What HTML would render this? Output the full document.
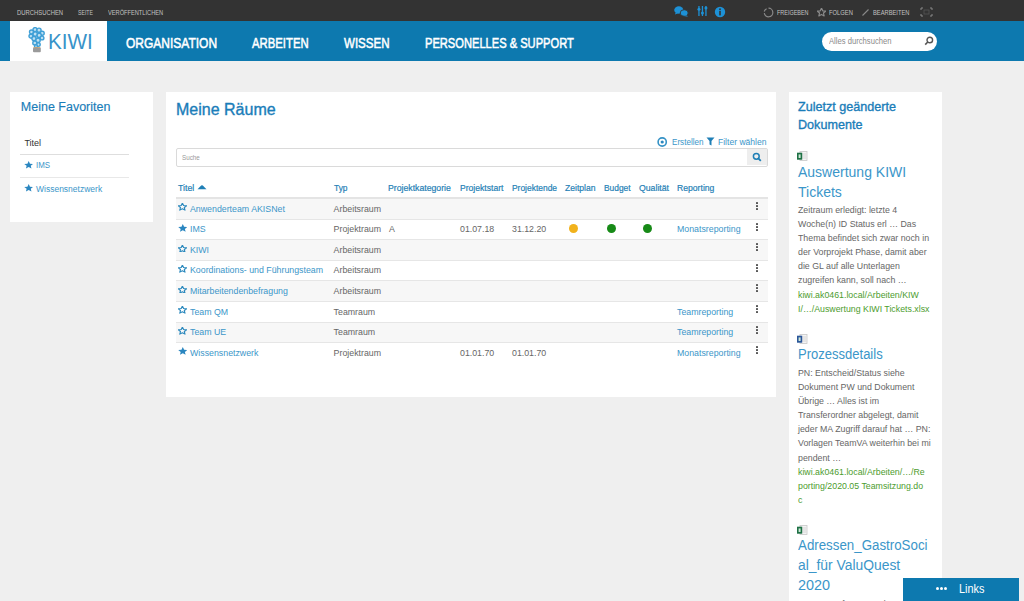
<!DOCTYPE html>
<html><head><meta charset="utf-8">
<style>
*{margin:0;padding:0;box-sizing:border-box}
html,body{width:1024px;height:601px;overflow:hidden;background:#efefef;font-family:"Liberation Sans",sans-serif;position:relative}
.a{position:absolute;white-space:nowrap;line-height:0}
.r{position:absolute}
</style></head><body>
<div class="r" style="left:0px;top:0px;width:1024px;height:21px;background:#333333;"></div>
<div class="a " style="left:17px;top:12.75px;font-size:7px;color:#c2c2c2;transform-origin:0 0;transform:scaleX(0.84)">DURCHSUCHEN</div>
<div class="a " style="left:78px;top:12.75px;font-size:7px;color:#c2c2c2;transform-origin:0 0;transform:scaleX(0.74)">SEITE</div>
<div class="a " style="left:107.5px;top:12.75px;font-size:7px;color:#c2c2c2;transform-origin:0 0;transform:scaleX(0.81)">VERÖFFENTLICHEN</div>
<div class="a " style="left:776.5px;top:12.75px;font-size:7px;color:#c2c2c2;transform-origin:0 0;transform:scaleX(0.78)">FREIGEBEN</div>
<div class="a " style="left:828.5px;top:12.75px;font-size:7px;color:#c2c2c2;transform-origin:0 0;transform:scaleX(0.83)">FOLGEN</div>
<div class="a " style="left:873px;top:12.75px;font-size:7px;color:#c2c2c2;transform-origin:0 0;transform:scaleX(0.82)">BEARBEITEN</div>
<svg class="r" style="left:674px;top:6px" width="15" height="11" viewBox="0 0 15 11"><ellipse cx="4.8" cy="4" rx="4.6" ry="3.7" fill="#1d91d6"/><path d="M1.8 6 L1 8.6 L4.2 7.2Z" fill="#1d91d6"/><ellipse cx="10.2" cy="7" rx="4" ry="3.3" fill="#1d91d6" stroke="#333" stroke-width="0.9"/><path d="M12.2 9.2 L14 10.8 L10 10Z" fill="#1d91d6"/></svg>
<svg class="r" style="left:697px;top:5px" width="11" height="12" viewBox="0 0 11 12"><rect x="1.3" y="1" width="1.3" height="10" fill="#1d91d6"/><rect x="4.8" y="1" width="1.3" height="10" fill="#1d91d6"/><rect x="8.3" y="1" width="1.3" height="10" fill="#1d91d6"/><circle cx="1.95" cy="4.2" r="1.5" fill="#1d91d6"/><circle cx="5.45" cy="8" r="1.5" fill="#1d91d6"/><circle cx="8.95" cy="3" r="1.5" fill="#1d91d6"/></svg>
<svg class="r" style="left:714px;top:6px" width="12" height="12" viewBox="0 0 12 12"><circle cx="6" cy="6" r="5.2" fill="#1d91d6"/><rect x="5.2" y="4.8" width="1.6" height="4.6" fill="#333"/><circle cx="6" cy="3.2" r="0.9" fill="#333"/></svg>
<svg class="r" style="left:763px;top:7px" width="11" height="11" viewBox="0 0 11 11"><path d="M5.5 1.2 A4.3 4.3 0 1 1 1.3 6.2" fill="none" stroke="#8a8a8a" stroke-width="1.2"/><path d="M1.2 4.5 A4.3 4.3 0 0 1 3.6 1.8" fill="none" stroke="#8a8a8a" stroke-width="1.2"/></svg>
<svg class="r" style="left:817px;top:8px" width="9" height="8.50" viewBox="0 0.4 10 9.2" preserveAspectRatio="none"><path d="M5.00,0.45 L6.35,3.43 L9.76,3.73 L7.19,5.88 L7.94,9.04 L5.00,7.38 L2.06,9.04 L2.81,5.88 L0.24,3.73 L3.65,3.43Z" fill="none" stroke="#8a8a8a" stroke-width="1.3" stroke-linejoin="round"/></svg>
<svg class="r" style="left:861px;top:8px" width="9" height="9" viewBox="0 0 9 9"><path d="M1.5 7.5 L7.5 1.5" stroke="#8a8a8a" stroke-width="1.1"/></svg>
<svg class="r" style="left:920px;top:7px" width="13" height="10" viewBox="0 0 13 10"><path d="M1 3 V1 H3 M10 1 H12 V3 M12 7 V9 H10 M3 9 H1 V7" fill="none" stroke="#8a8a8a" stroke-width="1"/><rect x="4" y="3" width="5" height="4" fill="none" stroke="#555" stroke-width="0.8"/></svg>
<div class="r" style="left:0px;top:21px;width:1024px;height:40px;background:#0d79af;"></div>
<div class="r" style="left:10px;top:21px;width:97px;height:40px;background:#ffffff;"></div>
<div class="a " style="left:126px;top:42.60px;font-size:14px;color:#ffffff;-webkit-text-stroke:0.5px #fff;transform-origin:0 0;transform:scaleX(0.8567397234502869)">ORGANISATION</div>
<div class="a " style="left:252px;top:42.60px;font-size:14px;color:#ffffff;-webkit-text-stroke:0.5px #fff;transform-origin:0 0;transform:scaleX(0.8094843593772318)">ARBEITEN</div>
<div class="a " style="left:344px;top:42.60px;font-size:14px;color:#ffffff;-webkit-text-stroke:0.5px #fff;transform-origin:0 0;transform:scaleX(0.8245518739815318)">WISSEN</div>
<div class="a " style="left:425px;top:42.60px;font-size:14px;color:#ffffff;-webkit-text-stroke:0.5px #fff;transform-origin:0 0;transform:scaleX(0.7944672897196261)">PERSONELLES &amp; SUPPORT</div>
<svg class="r" style="left:28px;top:27px" width="17" height="26" viewBox="0 0 17 26"><circle cx="3.5" cy="5" r="2" fill="#bfe0f2" stroke="#3f9fd6" stroke-width="1.4"/><circle cx="7" cy="2.6" r="2" fill="#bfe0f2" stroke="#3f9fd6" stroke-width="1.4"/><circle cx="11" cy="3.2" r="2.1" fill="#bfe0f2" stroke="#3f9fd6" stroke-width="1.4"/><circle cx="14.2" cy="6.2" r="2" fill="#bfe0f2" stroke="#3f9fd6" stroke-width="1.4"/><circle cx="3" cy="9.2" r="2" fill="#bfe0f2" stroke="#3f9fd6" stroke-width="1.4"/><circle cx="7.2" cy="7" r="2.2" fill="#bfe0f2" stroke="#3f9fd6" stroke-width="1.4"/><circle cx="11.2" cy="8.4" r="2.1" fill="#bfe0f2" stroke="#3f9fd6" stroke-width="1.4"/><circle cx="14" cy="11" r="1.9" fill="#bfe0f2" stroke="#3f9fd6" stroke-width="1.4"/><circle cx="6" cy="11.6" r="2.1" fill="#bfe0f2" stroke="#3f9fd6" stroke-width="1.4"/><circle cx="10" cy="13.2" r="2.2" fill="#bfe0f2" stroke="#3f9fd6" stroke-width="1.4"/><circle cx="6.8" cy="16" r="2" fill="#bfe0f2" stroke="#3f9fd6" stroke-width="1.4"/><circle cx="10.4" cy="17.6" r="1.8" fill="#bfe0f2" stroke="#3f9fd6" stroke-width="1.4"/><circle cx="8" cy="19.2" r="1.5" fill="#bfe0f2" stroke="#3f9fd6" stroke-width="1.4"/><rect x="5" y="20.4" width="7.8" height="4.8" rx="1" fill="#9a9a9a"/><rect x="5.5" y="20" width="6.8" height="0.8" fill="#c8a070"/></svg>
<div class="a " style="left:47.8px;top:42.33px;font-size:22.5px;color:#3893c9;transform-origin:0 0;transform:scaleX(0.92)">KIWI</div>
<div class="r" style="left:822px;top:32px;width:115px;height:18.5px;background:#ffffff;border-radius:9.5px"></div>
<svg class="r" style="left:924px;top:36px" width="10" height="10" viewBox="0 0 10 10"><circle cx="5.8" cy="4" r="2.8" fill="none" stroke="#555" stroke-width="1.4"/><path d="M3.8 6 L1.2 8.6" stroke="#555" stroke-width="1.6"/></svg>
<div class="a " style="left:829px;top:40.85px;font-size:9px;color:#8a8a8a;transform-origin:0 0;transform:scaleX(0.85)">Alles durchsuchen</div>
<div class="r" style="left:10px;top:92px;width:143px;height:130px;background:#fff;"></div>
<div class="r" style="left:166px;top:92px;width:610px;height:305px;background:#fff;"></div>
<div class="r" style="left:789px;top:92px;width:153px;height:509px;background:#fff;"></div>
<div class="a " style="left:20.8px;top:107.12px;font-size:12.5px;color:#1a7db9;-webkit-text-stroke:0.15px currentColor">Meine Favoriten</div>
<div class="a " style="left:24.4px;top:142.65px;font-size:9px;color:#333;">Titel</div>
<div class="r" style="left:20px;top:153.5px;width:109px;height:1px;background:#dedede;"></div>
<svg class="r" style="left:23.8px;top:160.6px" width="9.4" height="8.00" viewBox="0 0.4 10 9.2" preserveAspectRatio="none"><path d="M5.00,0.45 L6.35,3.43 L9.76,3.73 L7.19,5.88 L7.94,9.04 L5.00,7.38 L2.06,9.04 L2.81,5.88 L0.24,3.73 L3.65,3.43Z" fill="#2a86c0"/></svg>
<div class="a " style="left:36px;top:165.42px;font-size:8.8px;color:#3b96c9;transform-origin:0 0;transform:scaleX(0.9)">IMS</div>
<div class="r" style="left:20px;top:177px;width:109px;height:1px;background:#e8e8e8;"></div>
<svg class="r" style="left:23.8px;top:184px" width="9.4" height="8.00" viewBox="0 0.4 10 9.2" preserveAspectRatio="none"><path d="M5.00,0.45 L6.35,3.43 L9.76,3.73 L7.19,5.88 L7.94,9.04 L5.00,7.38 L2.06,9.04 L2.81,5.88 L0.24,3.73 L3.65,3.43Z" fill="#2a86c0"/></svg>
<div class="a " style="left:36px;top:188.83px;font-size:8.5px;color:#3b96c9;">Wissensnetzwerk</div>
<div class="a " style="left:176px;top:109.90px;font-size:16px;color:#1a7db9;-webkit-text-stroke:0.35px currentColor">Meine Räume</div>
<div class="a " style="left:671.5px;top:141.85px;font-size:9px;color:#3b96c9;transform-origin:0 0;transform:scaleX(0.9)">Erstellen</div>
<div class="a " style="left:718px;top:141.85px;font-size:9px;color:#3b96c9;transform-origin:0 0;transform:scaleX(0.95)">Filter wählen</div>
<div class="r" style="left:175.5px;top:148px;width:592.5px;height:18.5px;background:#fff;border:1px solid #dadada;border-radius:2px"></div>
<div class="r" style="left:747px;top:149px;width:20px;height:16px;background:#eeeeee;"></div>
<div class="a " style="left:182px;top:157.55px;font-size:7px;color:#9a9a9a;transform-origin:0 0;transform:scaleX(0.9)">Suche</div>
<div class="a " style="left:178px;top:187.85px;font-size:9px;color:#1f7fb6;-webkit-text-stroke:0.2px currentColor;transform-origin:0 0;transform:scaleX(0.972)">Titel</div>
<div class="a " style="left:333.6px;top:187.85px;font-size:9px;color:#1f7fb6;-webkit-text-stroke:0.2px currentColor;transform-origin:0 0;transform:scaleX(0.930)">Typ</div>
<div class="a " style="left:388.4px;top:187.85px;font-size:9px;color:#1f7fb6;-webkit-text-stroke:0.2px currentColor;transform-origin:0 0;transform:scaleX(0.966)">Projektkategorie</div>
<div class="a " style="left:459.9px;top:187.85px;font-size:9px;color:#1f7fb6;-webkit-text-stroke:0.2px currentColor;transform-origin:0 0;transform:scaleX(0.954)">Projektstart</div>
<div class="a " style="left:511.7px;top:187.85px;font-size:9px;color:#1f7fb6;-webkit-text-stroke:0.2px currentColor;transform-origin:0 0;transform:scaleX(0.937)">Projektende</div>
<div class="a " style="left:565.3px;top:187.85px;font-size:9px;color:#1f7fb6;-webkit-text-stroke:0.2px currentColor;transform-origin:0 0;transform:scaleX(0.953)">Zeitplan</div>
<div class="a " style="left:604px;top:187.85px;font-size:9px;color:#1f7fb6;-webkit-text-stroke:0.2px currentColor;transform-origin:0 0;transform:scaleX(0.933)">Budget</div>
<div class="a " style="left:638.8px;top:187.85px;font-size:9px;color:#1f7fb6;-webkit-text-stroke:0.2px currentColor;transform-origin:0 0;transform:scaleX(0.967)">Qualität</div>
<div class="a " style="left:677px;top:187.85px;font-size:9px;color:#1f7fb6;-webkit-text-stroke:0.2px currentColor;transform-origin:0 0;transform:scaleX(0.958)">Reporting</div>
<div class="r" style="left:176px;top:197px;width:592px;height:2px;background:#e4e4e4;"></div>
<svg class="r" style="left:197px;top:185px" width="10" height="5" viewBox="0 0 10 5"><path d="M0.5 4.2 L4.2 0.6 Q5 0 5.8 0.6 L9.5 4.2Z" fill="#1f7fb6"/></svg>
<svg class="r" style="left:657px;top:137px" width="11" height="11" viewBox="0 0 11 11"><circle cx="5.2" cy="5" r="4.1" fill="none" stroke="#3592c6" stroke-width="1.6"/><circle cx="5.2" cy="5" r="1.6" fill="#2a88bf"/></svg>
<svg class="r" style="left:706px;top:137px" width="9" height="9" viewBox="0 0 9 9"><path d="M0.5 0.5 H8.5 L5.5 4 V8.5 L3.5 7.5 V4Z" fill="#1f7fb6"/></svg>
<svg class="r" style="left:752px;top:152px" width="10" height="10" viewBox="0 0 10 10"><circle cx="4.3" cy="4.3" r="2.9" fill="none" stroke="#1f7fb6" stroke-width="1.5"/><path d="M6.3 6.3 L8.8 8.8" stroke="#1f7fb6" stroke-width="1.8"/></svg>
<div class="r" style="left:176px;top:198.5px;width:592px;height:20.6px;background:#f7f7f7;"></div>
<svg class="r" style="left:178px;top:203.4px" width="8.8" height="7.60" viewBox="0 0.4 10 9.2" preserveAspectRatio="none"><path d="M5.00,0.45 L6.35,3.43 L9.76,3.73 L7.19,5.88 L7.94,9.04 L5.00,7.38 L2.06,9.04 L2.81,5.88 L0.24,3.73 L3.65,3.43Z" fill="none" stroke="#2a88bd" stroke-width="1.3" stroke-linejoin="round"/></svg>
<div class="a " style="left:190px;top:208.62px;font-size:8.8px;color:#3b96c9;">Anwenderteam AKISNet</div>
<div class="a " style="left:333.6px;top:208.62px;font-size:8.8px;color:#666666;">Arbeitsraum</div>
<div class="r" style="left:756px;top:202px;width:2px;height:2px;background:#555;border-radius:0.6px"></div>
<div class="r" style="left:756px;top:205px;width:2px;height:2px;background:#555;border-radius:0.6px"></div>
<div class="r" style="left:756px;top:208px;width:2px;height:2px;background:#555;border-radius:0.6px"></div>
<div class="r" style="left:176px;top:218.6px;width:592px;height:1px;background:#e6e6e6;"></div>
<svg class="r" style="left:177.6px;top:223.79999999999998px" width="9.6" height="8.20" viewBox="0 0.4 10 9.2" preserveAspectRatio="none"><path d="M5.00,0.45 L6.35,3.43 L9.76,3.73 L7.19,5.88 L7.94,9.04 L5.00,7.38 L2.06,9.04 L2.81,5.88 L0.24,3.73 L3.65,3.43Z" fill="#2a86c0"/></svg>
<div class="a " style="left:190px;top:229.22px;font-size:8.8px;color:#3b96c9;">IMS</div>
<div class="a " style="left:333.6px;top:229.22px;font-size:8.8px;color:#666666;">Projektraum</div>
<div class="a " style="left:389px;top:229.22px;font-size:8.8px;color:#666666;">A</div>
<div class="a " style="left:460px;top:229.22px;font-size:8.8px;color:#666666;">01.07.18</div>
<div class="a " style="left:512px;top:229.22px;font-size:8.8px;color:#666666;">31.12.20</div>
<div class="a " style="left:677px;top:229.22px;font-size:8.8px;color:#3b96c9;">Monatsreporting</div>
<div class="r" style="left:569.2px;top:224.0px;width:9px;height:9px;background:#f1b21c;border-radius:50%"></div>
<div class="r" style="left:607.4px;top:224.0px;width:9px;height:9px;background:#178a17;border-radius:50%"></div>
<div class="r" style="left:642.9px;top:224.0px;width:9px;height:9px;background:#178a17;border-radius:50%"></div>
<div class="r" style="left:756px;top:223px;width:2px;height:2px;background:#555;border-radius:0.6px"></div>
<div class="r" style="left:756px;top:226px;width:2px;height:2px;background:#555;border-radius:0.6px"></div>
<div class="r" style="left:756px;top:229px;width:2px;height:2px;background:#555;border-radius:0.6px"></div>
<div class="r" style="left:176px;top:239.7px;width:592px;height:20.6px;background:#f7f7f7;"></div>
<div class="r" style="left:176px;top:239.2px;width:592px;height:1px;background:#e6e6e6;"></div>
<svg class="r" style="left:178px;top:244.6px" width="8.8" height="7.60" viewBox="0 0.4 10 9.2" preserveAspectRatio="none"><path d="M5.00,0.45 L6.35,3.43 L9.76,3.73 L7.19,5.88 L7.94,9.04 L5.00,7.38 L2.06,9.04 L2.81,5.88 L0.24,3.73 L3.65,3.43Z" fill="none" stroke="#2a88bd" stroke-width="1.3" stroke-linejoin="round"/></svg>
<div class="a " style="left:190px;top:249.82px;font-size:8.8px;color:#3b96c9;">KIWI</div>
<div class="a " style="left:333.6px;top:249.82px;font-size:8.8px;color:#666666;">Arbeitsraum</div>
<div class="r" style="left:756px;top:243px;width:2px;height:2px;background:#555;border-radius:0.6px"></div>
<div class="r" style="left:756px;top:246px;width:2px;height:2px;background:#555;border-radius:0.6px"></div>
<div class="r" style="left:756px;top:249px;width:2px;height:2px;background:#555;border-radius:0.6px"></div>
<div class="r" style="left:176px;top:259.8px;width:592px;height:1px;background:#e6e6e6;"></div>
<svg class="r" style="left:178px;top:265.2px" width="8.8" height="7.60" viewBox="0 0.4 10 9.2" preserveAspectRatio="none"><path d="M5.00,0.45 L6.35,3.43 L9.76,3.73 L7.19,5.88 L7.94,9.04 L5.00,7.38 L2.06,9.04 L2.81,5.88 L0.24,3.73 L3.65,3.43Z" fill="none" stroke="#2a88bd" stroke-width="1.3" stroke-linejoin="round"/></svg>
<div class="a " style="left:190px;top:270.42px;font-size:8.8px;color:#3b96c9;">Koordinations- und Führungsteam</div>
<div class="a " style="left:333.6px;top:270.42px;font-size:8.8px;color:#666666;">Arbeitsraum</div>
<div class="r" style="left:756px;top:264px;width:2px;height:2px;background:#555;border-radius:0.6px"></div>
<div class="r" style="left:756px;top:267px;width:2px;height:2px;background:#555;border-radius:0.6px"></div>
<div class="r" style="left:756px;top:270px;width:2px;height:2px;background:#555;border-radius:0.6px"></div>
<div class="r" style="left:176px;top:280.9px;width:592px;height:20.6px;background:#f7f7f7;"></div>
<div class="r" style="left:176px;top:280.4px;width:592px;height:1px;background:#e6e6e6;"></div>
<svg class="r" style="left:178px;top:285.79999999999995px" width="8.8" height="7.60" viewBox="0 0.4 10 9.2" preserveAspectRatio="none"><path d="M5.00,0.45 L6.35,3.43 L9.76,3.73 L7.19,5.88 L7.94,9.04 L5.00,7.38 L2.06,9.04 L2.81,5.88 L0.24,3.73 L3.65,3.43Z" fill="none" stroke="#2a88bd" stroke-width="1.3" stroke-linejoin="round"/></svg>
<div class="a " style="left:190px;top:291.02px;font-size:8.8px;color:#3b96c9;">Mitarbeitendenbefragung</div>
<div class="a " style="left:333.6px;top:291.02px;font-size:8.8px;color:#666666;">Arbeitsraum</div>
<div class="r" style="left:756px;top:284px;width:2px;height:2px;background:#555;border-radius:0.6px"></div>
<div class="r" style="left:756px;top:287px;width:2px;height:2px;background:#555;border-radius:0.6px"></div>
<div class="r" style="left:756px;top:290px;width:2px;height:2px;background:#555;border-radius:0.6px"></div>
<div class="r" style="left:176px;top:301.0px;width:592px;height:1px;background:#e6e6e6;"></div>
<svg class="r" style="left:178px;top:306.4px" width="8.8" height="7.60" viewBox="0 0.4 10 9.2" preserveAspectRatio="none"><path d="M5.00,0.45 L6.35,3.43 L9.76,3.73 L7.19,5.88 L7.94,9.04 L5.00,7.38 L2.06,9.04 L2.81,5.88 L0.24,3.73 L3.65,3.43Z" fill="none" stroke="#2a88bd" stroke-width="1.3" stroke-linejoin="round"/></svg>
<div class="a " style="left:190px;top:311.62px;font-size:8.8px;color:#3b96c9;">Team QM</div>
<div class="a " style="left:333.6px;top:311.62px;font-size:8.8px;color:#666666;">Teamraum</div>
<div class="a " style="left:677px;top:311.62px;font-size:8.8px;color:#3b96c9;">Teamreporting</div>
<div class="r" style="left:756px;top:305px;width:2px;height:2px;background:#555;border-radius:0.6px"></div>
<div class="r" style="left:756px;top:308px;width:2px;height:2px;background:#555;border-radius:0.6px"></div>
<div class="r" style="left:756px;top:311px;width:2px;height:2px;background:#555;border-radius:0.6px"></div>
<div class="r" style="left:176px;top:322.1px;width:592px;height:20.6px;background:#f7f7f7;"></div>
<div class="r" style="left:176px;top:321.6px;width:592px;height:1px;background:#e6e6e6;"></div>
<svg class="r" style="left:178px;top:327.0px" width="8.8" height="7.60" viewBox="0 0.4 10 9.2" preserveAspectRatio="none"><path d="M5.00,0.45 L6.35,3.43 L9.76,3.73 L7.19,5.88 L7.94,9.04 L5.00,7.38 L2.06,9.04 L2.81,5.88 L0.24,3.73 L3.65,3.43Z" fill="none" stroke="#2a88bd" stroke-width="1.3" stroke-linejoin="round"/></svg>
<div class="a " style="left:190px;top:332.22px;font-size:8.8px;color:#3b96c9;">Team UE</div>
<div class="a " style="left:333.6px;top:332.22px;font-size:8.8px;color:#666666;">Teamraum</div>
<div class="a " style="left:677px;top:332.22px;font-size:8.8px;color:#3b96c9;">Teamreporting</div>
<div class="r" style="left:756px;top:326px;width:2px;height:2px;background:#555;border-radius:0.6px"></div>
<div class="r" style="left:756px;top:329px;width:2px;height:2px;background:#555;border-radius:0.6px"></div>
<div class="r" style="left:756px;top:332px;width:2px;height:2px;background:#555;border-radius:0.6px"></div>
<div class="r" style="left:176px;top:342.2px;width:592px;height:1px;background:#e6e6e6;"></div>
<svg class="r" style="left:177.6px;top:347.40000000000003px" width="9.6" height="8.20" viewBox="0 0.4 10 9.2" preserveAspectRatio="none"><path d="M5.00,0.45 L6.35,3.43 L9.76,3.73 L7.19,5.88 L7.94,9.04 L5.00,7.38 L2.06,9.04 L2.81,5.88 L0.24,3.73 L3.65,3.43Z" fill="#2a86c0"/></svg>
<div class="a " style="left:190px;top:352.82px;font-size:8.8px;color:#3b96c9;">Wissensnetzwerk</div>
<div class="a " style="left:333.6px;top:352.82px;font-size:8.8px;color:#666666;">Projektraum</div>
<div class="a " style="left:460px;top:352.82px;font-size:8.8px;color:#666666;">01.01.70</div>
<div class="a " style="left:512px;top:352.82px;font-size:8.8px;color:#666666;">01.01.70</div>
<div class="a " style="left:677px;top:352.82px;font-size:8.8px;color:#3b96c9;">Monatsreporting</div>
<div class="r" style="left:756px;top:346px;width:2px;height:2px;background:#555;border-radius:0.6px"></div>
<div class="r" style="left:756px;top:349px;width:2px;height:2px;background:#555;border-radius:0.6px"></div>
<div class="r" style="left:756px;top:352px;width:2px;height:2px;background:#555;border-radius:0.6px"></div>
<div class="a " style="left:798px;top:107.19px;font-size:12.6px;color:#1a7db9;-webkit-text-stroke:0.35px currentColor">Zuletzt geänderte</div>
<div class="a " style="left:798px;top:124.99px;font-size:12.6px;color:#1a7db9;-webkit-text-stroke:0.35px currentColor">Dokumente</div>
<svg class="r" style="left:797px;top:151px" width="11" height="10" viewBox="0 0 11 10"><rect x="3" y="0.5" width="7" height="9" fill="#f4f4f4" stroke="#c8c8c8" stroke-width="0.8"/><path d="M5 3H9M5 5H9M5 7H9" stroke="#cfcfcf" stroke-width="0.8"/><rect x="0" y="1.7" width="5.2" height="7" fill="#1e7145"/><rect x="1.6" y="3.4" width="2" height="3.6" fill="#cfe8d8"/></svg>
<div class="a " style="left:798px;top:172.10px;font-size:14px;color:#3b96c9;">Auswertung KIWI</div>
<div class="a " style="left:798px;top:191.70px;font-size:14px;color:#3b96c9;">Tickets</div>
<div class="a " style="left:798px;top:209.92px;font-size:8.8px;color:#666666;">Zeitraum erledigt: letzte 4</div>
<div class="a " style="left:798px;top:224.02px;font-size:8.8px;color:#666666;">Woche(n) ID Status erl … Das</div>
<div class="a " style="left:798px;top:238.12px;font-size:8.8px;color:#666666;">Thema befindet sich zwar noch in</div>
<div class="a " style="left:798px;top:252.22px;font-size:8.8px;color:#666666;">der Vorprojekt Phase, damit aber</div>
<div class="a " style="left:798px;top:266.32px;font-size:8.8px;color:#666666;">die GL auf alle Unterlagen</div>
<div class="a " style="left:798px;top:280.42px;font-size:8.8px;color:#666666;">zugreifen kann, soll nach …</div>
<div class="a " style="left:798px;top:294.92px;font-size:8.8px;color:#4c9c2e;">kiwi.ak0461.local/Arbeiten/KIW</div>
<div class="a " style="left:798px;top:308.92px;font-size:8.8px;color:#4c9c2e;">I/…/Auswertung KIWI Tickets.xlsx</div>
<svg class="r" style="left:797px;top:334px" width="11" height="10" viewBox="0 0 11 10"><rect x="3" y="0.5" width="7" height="9" fill="#f4f4f4" stroke="#c8c8c8" stroke-width="0.8"/><path d="M5 3H9M5 5H9M5 7H9" stroke="#cfcfcf" stroke-width="0.8"/><rect x="0" y="1.7" width="5.2" height="7" fill="#2b579a"/><rect x="1.6" y="3.4" width="2" height="3.6" fill="#cfe8d8"/></svg>
<div class="a " style="left:798px;top:354.10px;font-size:14px;color:#3b96c9;transform-origin:0 0;transform:scaleX(0.93)">Prozessdetails</div>
<div class="a " style="left:798px;top:372.92px;font-size:8.8px;color:#666666;">PN: Entscheid/Status siehe</div>
<div class="a " style="left:798px;top:387.02px;font-size:8.8px;color:#666666;">Dokument PW und Dokument</div>
<div class="a " style="left:798px;top:401.12px;font-size:8.8px;color:#666666;">Übrige … Alles ist im</div>
<div class="a " style="left:798px;top:415.22px;font-size:8.8px;color:#666666;">Transferordner abgelegt, damit</div>
<div class="a " style="left:798px;top:429.32px;font-size:8.8px;color:#666666;">jeder MA Zugriff darauf hat … PN:</div>
<div class="a " style="left:798px;top:443.42px;font-size:8.8px;color:#666666;">Vorlagen TeamVA weiterhin bei mi</div>
<div class="a " style="left:798px;top:457.52px;font-size:8.8px;color:#666666;">pendent …</div>
<div class="a " style="left:798px;top:471.92px;font-size:8.8px;color:#4c9c2e;">kiwi.ak0461.local/Arbeiten/…/Re</div>
<div class="a " style="left:798px;top:485.92px;font-size:8.8px;color:#4c9c2e;">porting/2020.05 Teamsitzung.do</div>
<div class="a " style="left:798px;top:499.92px;font-size:8.8px;color:#4c9c2e;">c</div>
<svg class="r" style="left:797px;top:525px" width="11" height="10" viewBox="0 0 11 10"><rect x="3" y="0.5" width="7" height="9" fill="#f4f4f4" stroke="#c8c8c8" stroke-width="0.8"/><path d="M5 3H9M5 5H9M5 7H9" stroke="#cfcfcf" stroke-width="0.8"/><rect x="0" y="1.7" width="5.2" height="7" fill="#1e7145"/><rect x="1.6" y="3.4" width="2" height="3.6" fill="#cfe8d8"/></svg>
<div class="a " style="left:798px;top:544.60px;font-size:14px;color:#3b96c9;transform-origin:0 0;transform:scaleX(0.951)">Adressen_GastroSoci</div>
<div class="a " style="left:798px;top:564.60px;font-size:14px;color:#3b96c9;transform-origin:0 0;transform:scaleX(0.99)">al_für ValuQuest</div>
<div class="a " style="left:798px;top:584.60px;font-size:14px;color:#3b96c9;transform-origin:0 0;transform:scaleX(1.03)">2020</div>
<div class="a " style="left:798px;top:603.92px;font-size:8.8px;color:#666666;">Zusammenfassung Adressen</div>
<div class="r" style="left:903px;top:578px;width:116px;height:23px;background:#0d79af;"></div>
<div class="a " style="left:958.8px;top:588.83px;font-size:12.5px;color:#ffffff;transform-origin:0 0;transform:scaleX(0.87)">Links</div>
<div class="r" style="left:936.0px;top:587px;width:3.2px;height:3.2px;background:#fff;border-radius:50%"></div>
<div class="r" style="left:940.1px;top:587px;width:3.2px;height:3.2px;background:#fff;border-radius:50%"></div>
<div class="r" style="left:944.2px;top:587px;width:3.2px;height:3.2px;background:#fff;border-radius:50%"></div>
</body></html>
